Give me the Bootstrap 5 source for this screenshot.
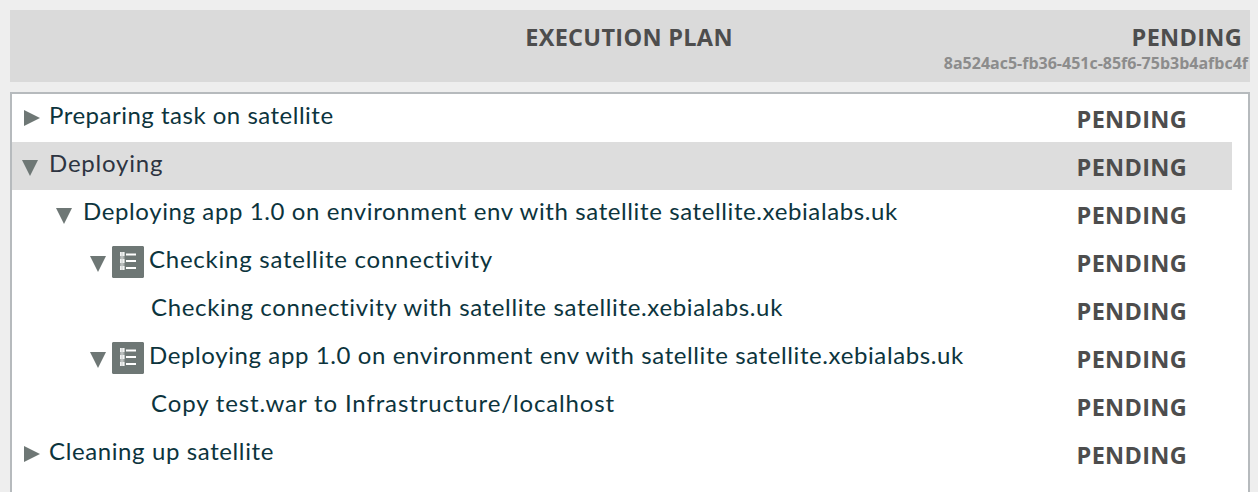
<!DOCTYPE html>
<html lang="en">
<head>
<meta charset="utf-8">
<title>Execution plan</title>
<link href="https://cdn.jsdelivr.net/npm/bootstrap@5.3.0/dist/css/bootstrap.min.css" rel="stylesheet">
<style>
body{background:#eee;height:492px;overflow:hidden;font-family:"Open Sans","Noto Sans",sans-serif;color:#4d4d4d;padding:10px 8px 0 10px}
.plan-head{background:#dadada;height:72px;margin-bottom:10px;display:grid;grid-template-columns:1fr auto 1fr}
.plan-title,.state{font-size:23.5px;font-weight:700;line-height:30px;white-space:nowrap;letter-spacing:.3px}
.plan-title,.plan-head .state{padding-top:12px}
.plan-title{margin-left:-2px}
.plan-id{font-size:16px;font-weight:700;line-height:22px;color:#8c8c8c;padding-right:2px}
.plan-body{background:#fff;border:2px solid #b6babd;height:420px;padding-right:16px}
.step{height:48px;padding-left:12px}
.step.active{background:#ddd}
.lvl-1{padding-left:46px}.lvl-2{padding-left:80px}.lvl-3{padding-left:139px}
.step-name{font-family:Lato,sans-serif;font-size:24px;line-height:42px;color:#0c343d;white-space:nowrap;letter-spacing:.61px}
.ls-a{letter-spacing:.5px}.ls-b{letter-spacing:.8px}.ls-c{letter-spacing:.65px}.ls-d{letter-spacing:.87px}.ls-e{letter-spacing:.75px}
.active .step-name{color:#2d3441}
.step .state{padding-top:4px;line-height:42px;margin-left:auto;margin-right:45px}
.caret{width:16px;height:16px;margin:16px 9px 0 0;flex:none;fill:#6e7775}
.caret.down{margin:18px 11px 0 -2px}
.lvl-2 .caret.down{margin-right:6px}
.ico{width:32px;height:32px;margin:8px 5px 0 0;flex:none}
</style>
</head>
<body>
<svg class="d-none"><symbol id="steps" viewBox="0 0 32 32"><rect width="32" height="32" fill="#aeb3b2"/><path d="M1 0H31V1H32V31H31V32H1V31H0V1H1Z" fill="#6e7775"/><path d="M8 6h4.5v18H8z" fill="#a9aead"/><path d="M8 6h4.5v4H8zM8 13h4.5v4H8zM8 20h4.5v4H8z" fill="#f1f2f2"/><path d="M10 6v18" stroke="#c9cdcc"/><path d="M14 8.5h10M14 15h10M14 22h10" stroke="#fff" stroke-width="2"/></symbol></svg>
<header class="plan-head">
  <span></span>
  <div class="plan-title">EXECUTION PLAN</div>
  <div class="text-end"><div class="state pe-2">PENDING</div><div class="plan-id">8a524ac5-fb36-451c-85f6-75b3b4afbc4f</div></div>
</header>
<main class="plan-body">
  <div class="step d-flex"><svg class="caret" viewBox="0 0 16 16"><path d="M0 0L16 8L0 16Z"/></svg><span class="step-name ls-a">Preparing task on satellite</span><span class="state">PENDING</span></div>
  <div class="step d-flex active"><svg class="caret down" viewBox="0 0 16 16"><path d="M0 0H16L8 16Z"/></svg><span class="step-name ls-b">Deploying</span><span class="state">PENDING</span></div>
  <div class="step lvl-1 d-flex"><svg class="caret down" viewBox="0 0 16 16"><path d="M0 0H16L8 16Z"/></svg><span class="step-name">Deploying app 1.0 on environment env with satellite satellite.xebialabs.uk</span><span class="state">PENDING</span></div>
  <div class="step lvl-2 d-flex"><svg class="caret down" viewBox="0 0 16 16"><path d="M0 0H16L8 16Z"/></svg><svg class="ico"><use href="#steps"/></svg><span class="step-name ls-e">Checking satellite connectivity</span><span class="state">PENDING</span></div>
  <div class="step lvl-3 d-flex"><span class="step-name ls-c">Checking connectivity with satellite satellite.xebialabs.uk</span><span class="state">PENDING</span></div>
  <div class="step lvl-2 d-flex"><svg class="caret down" viewBox="0 0 16 16"><path d="M0 0H16L8 16Z"/></svg><svg class="ico"><use href="#steps"/></svg><span class="step-name">Deploying app 1.0 on environment env with satellite satellite.xebialabs.uk</span><span class="state">PENDING</span></div>
  <div class="step lvl-3 d-flex"><span class="step-name ls-d">Copy test.war to Infrastructure/localhost</span><span class="state">PENDING</span></div>
  <div class="step d-flex"><svg class="caret" viewBox="0 0 16 16"><path d="M0 0L16 8L0 16Z"/></svg><span class="step-name">Cleaning up satellite</span><span class="state">PENDING</span></div>
</main>
<script src="https://cdn.jsdelivr.net/npm/bootstrap@5.3.0/dist/js/bootstrap.bundle.min.js"></script>
</body>
</html>
